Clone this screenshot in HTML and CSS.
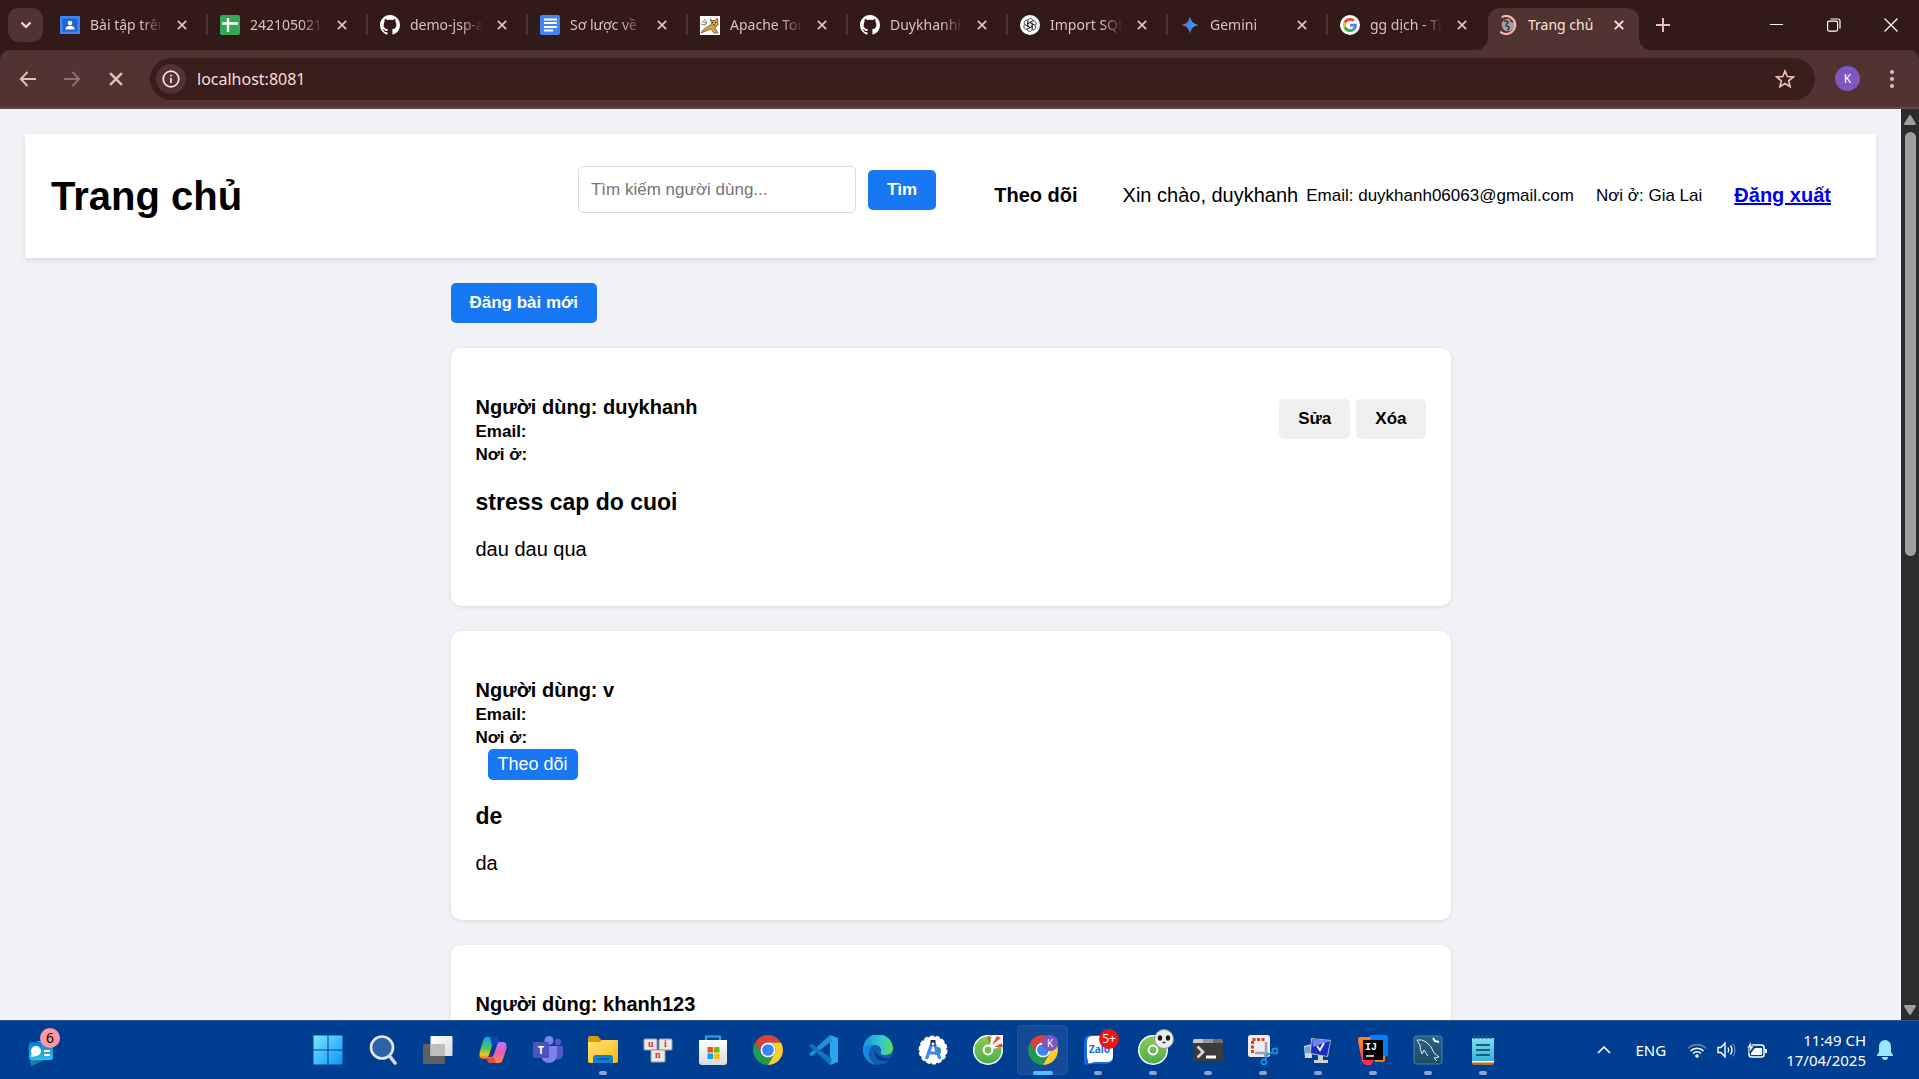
FILE: index.html
```html
<!DOCTYPE html>
<html lang="vi">
<head>
<meta charset="utf-8">
<meta name="viewport" content="width=device-width, initial-scale=1">
<title>Trang chủ</title>
<link rel="stylesheet" href="styles.css">
</head>
<body>
<svg class="defs" aria-hidden="true">
  <defs>
    <linearGradient id="g-gem" x1="0" x2="1"><stop offset="0" stop-color="#b06bb8"/><stop offset=".4" stop-color="#4a80dd"/><stop offset="1" stop-color="#2bb3f0"/></linearGradient>
    <linearGradient id="g-win" x1="0" y1="0" x2="1" y2="1"><stop offset="0" stop-color="#7be8ff"/><stop offset="1" stop-color="#0c93f5"/></linearGradient>
    <linearGradient id="g-view" x1="0" y1="0" x2="1" y2="1"><stop offset="0" stop-color="#fff"/><stop offset="1" stop-color="#dcdcdc"/></linearGradient>
    <linearGradient id="g-cop1" x1="0" y1="0" x2="0" y2="1"><stop offset="0" stop-color="#12a5f4"/><stop offset=".5" stop-color="#4fc35a"/><stop offset=".8" stop-color="#f2c51e"/><stop offset="1" stop-color="#ef5a2c"/></linearGradient>
    <linearGradient id="g-cop2" x1="0" y1="0" x2="0" y2="1"><stop offset="0" stop-color="#b47bf2"/><stop offset=".5" stop-color="#ea5cae"/><stop offset="1" stop-color="#fa8a45"/></linearGradient>
    <linearGradient id="g-folder" x1="0" y1="0" x2="1" y2="1"><stop offset="0" stop-color="#ffe27a"/><stop offset="1" stop-color="#fdb913"/></linearGradient>
    <linearGradient id="g-store" x1="0" y1="0" x2="0" y2="1"><stop offset="0" stop-color="#fff"/><stop offset="1" stop-color="#d6dbe2"/></linearGradient>
    <linearGradient id="g-edge" x1="0" y1="0" x2="1" y2="0"><stop offset="0" stop-color="#1f8fdf"/><stop offset=".55" stop-color="#2fc4d6"/><stop offset="1" stop-color="#5fdc5a"/></linearGradient>
    <linearGradient id="g-coc" x1="0" y1="0" x2="0" y2="1"><stop offset="0" stop-color="#8ecb4c"/><stop offset="1" stop-color="#4caf50"/></linearGradient>
    <linearGradient id="g-sql" x1="0" y1="0" x2="0" y2="1"><stop offset="0" stop-color="#2a6285"/><stop offset="1" stop-color="#1d4b68"/></linearGradient>
    <linearGradient id="g-note" x1="0" y1="0" x2="0" y2="1"><stop offset="0" stop-color="#7fe0f2"/><stop offset="1" stop-color="#35b0d2"/></linearGradient>
    <linearGradient id="g-ij" x1="0" y1="0" x2="0" y2="1"><stop offset="0" stop-color="#ff8a1e"/><stop offset="1" stop-color="#fb2c6a"/></linearGradient>
    <linearGradient id="g-wid" x1="0" y1="0" x2="0" y2="1"><stop offset="0" stop-color="#0a78d8"/><stop offset="1" stop-color="#2cc4e4"/></linearGradient>
  </defs>
  <symbol id="i-close" viewBox="0 0 10 10"><path d="M.8.8l8.4 8.4M9.2.8L.8 9.2" fill="none" stroke="currentColor" stroke-width="1.8"/></symbol>
  <symbol id="i-github" viewBox="0 0 16 16"><path fill="#fff" d="M8 0C3.58 0 0 3.58 0 8c0 3.54 2.29 6.53 5.47 7.59.4.07.55-.17.55-.38 0-.19-.01-.82-.01-1.49-2.01.37-2.53-.49-2.69-.94-.09-.23-.48-.94-.82-1.13-.28-.15-.68-.52-.01-.53.63-.01 1.08.58 1.23.82.72 1.21 1.87.87 2.33.66.07-.52.28-.87.51-1.07-1.78-.2-3.64-.89-3.64-3.95 0-.87.31-1.59.82-2.15-.08-.2-.36-1.02.08-2.12 0 0 .67-.21 2.2.82.64-.18 1.32-.27 2-.27s1.36.09 2 .27c1.53-1.04 2.2-.82 2.2-.82.44 1.1.16 1.92.08 2.12.51.56.82 1.27.82 2.15 0 3.07-1.87 3.75-3.65 3.95.29.25.54.73.54 1.48 0 1.07-.01 1.93-.01 2.2 0 .21.15.46.55.38A8.01 8.01 0 0 0 16 8c0-4.42-3.58-8-8-8Z"/></symbol>
  <symbol id="i-chrome" viewBox="2 2 44 44">
    <path fill="#dc4335" d="M4.95 13A22 22 0 0 1 43.05 13H24A11 11 0 0 0 14.47 29.5Z"/>
    <path fill="#1f9a50" d="M4.95 13L14.47 29.5A11 11 0 0 0 33.53 29.5L24 46A22 22 0 0 1 4.95 13Z"/>
    <path fill="#fccc30" d="M24 46L33.53 29.5A11 11 0 0 0 24 13H43.05A22 22 0 0 1 24 46Z"/>
    <circle cx="24" cy="24" r="11" fill="#fff"/><circle cx="24" cy="24" r="8.6" fill="#3f83f0"/>
  </symbol>
  <symbol id="i-coccoc" viewBox="0 0 30 30">
    <circle cx="15" cy="15" r="15" fill="#fff"/><circle cx="15" cy="15" r="13.6" fill="url(#g-coc)"/>
    <circle cx="15" cy="15" r="4.4" fill="none" stroke="#fff" stroke-width="2"/>
  </symbol>
</svg>

<header class="tabstrip">
  <button class="tab-search" aria-label="Tìm kiếm thẻ"><svg width="12" height="8" viewBox="0 0 12 8"><path d="M1.5 1.5L6 6l4.5-4.500" fill="none" stroke="currentColor" stroke-width="2.2"/></svg></button>
  <nav class="tabs">
    <div class="tab">
      <svg class="favicon" viewBox="0 0 20 20"><rect y="1" width="20" height="18" rx="1" fill="#4285f4"/><rect x="2.500" y="3.500" width="15" height="13" fill="#1a66d2"/><circle cx="10" cy="8" r="2.300" fill="#fff"/><path d="M5.500 14.500c0-3 2-3.700 4.500-3.700s4.500.7 4.500 3.700z" fill="#fff"/></svg>
      <span class="tab-title">Bài tập trên lớp</span><button class="tab-close" aria-label="Đóng"><svg width="10" height="10"><use href="#i-close"/></svg></button>
    </div>
    <div class="tab">
      <svg class="favicon" viewBox="0 0 20 20"><rect width="20" height="20" rx="2" fill="#34a853"/><path d="M8 3v14M2 8.500h16" stroke="#fff" stroke-width="2.400"/></svg>
      <span class="tab-title">242105021101</span><button class="tab-close" aria-label="Đóng"><svg width="10" height="10"><use href="#i-close"/></svg></button>
    </div>
    <div class="tab">
      <svg class="favicon"><use href="#i-github"/></svg>
      <span class="tab-title">demo-jsp-app</span><button class="tab-close" aria-label="Đóng"><svg width="10" height="10"><use href="#i-close"/></svg></button>
    </div>
    <div class="tab">
      <svg class="favicon" viewBox="0 0 20 20"><rect width="20" height="20" rx="2" fill="#4285f4"/><path d="M4 4.500h13M4 8h13M4 12h13M4 15.500h9" stroke="#fff" stroke-width="1.900"/></svg>
      <span class="tab-title">Sơ lược về JSP</span><button class="tab-close" aria-label="Đóng"><svg width="10" height="10"><use href="#i-close"/></svg></button>
    </div>
    <div class="tab">
      <svg class="favicon" viewBox="0 0 20 20"><rect y="1" width="20" height="19" fill="#fdfcf8"/><path d="M10 4l2 1.500h3L17.500 3l.5 7-3 3 3 5h-4l-3-4-5 2-5 2 2-3 4-3 5-3z" fill="#d9a33c" stroke="#5a4632" stroke-width=".7"/><path d="M2 6l5 3M1 9l5 1M4 4l3 4" stroke="#555" stroke-width=".8"/><path d="M12 7l1 1m3-1l-1 1m-2 2h2" stroke="#222"/></svg>
      <span class="tab-title">Apache Tomcat</span><button class="tab-close" aria-label="Đóng"><svg width="10" height="10"><use href="#i-close"/></svg></button>
    </div>
    <div class="tab">
      <svg class="favicon"><use href="#i-github"/></svg>
      <span class="tab-title">Duykhanhh06</span><button class="tab-close" aria-label="Đóng"><svg width="10" height="10"><use href="#i-close"/></svg></button>
    </div>
    <div class="tab">
      <svg class="favicon" viewBox="0 0 20 20"><circle cx="10" cy="10" r="10" fill="#fff"/><g fill="none" stroke="#222" stroke-width=".8"><path id="petal" d="M7.800 11.300V6.200c0-3.600 5.200-3.300 5.300-.2M7.800 8.700l4.400-2.500"/><use href="#petal" transform="rotate(60 10 10)"/><use href="#petal" transform="rotate(120 10 10)"/><use href="#petal" transform="rotate(180 10 10)"/><use href="#petal" transform="rotate(240 10 10)"/><use href="#petal" transform="rotate(300 10 10)"/></g></svg>
      <span class="tab-title">Import SQL file</span><button class="tab-close" aria-label="Đóng"><svg width="10" height="10"><use href="#i-close"/></svg></button>
    </div>
    <div class="tab">
      <svg class="favicon" viewBox="0 0 20 20"><path d="M10 1c1 5.500 3.500 8 8.500 9-5 1-7.500 3.500-8.500 9-1-5.500-3.500-8-8.500-9 5-1 7.500-3.500 8.500-9z" fill="url(#g-gem)"/></svg>
      <span class="tab-title">Gemini</span><button class="tab-close" aria-label="Đóng"><svg width="10" height="10"><use href="#i-close"/></svg></button>
    </div>
    <div class="tab tab-last">
      <svg class="favicon" viewBox="-10 -10 68 68"><circle cx="24" cy="24" r="34" fill="#fff"/><path fill="#EA4335" d="M24 9.500c3.540 0 6.710 1.220 9.210 3.600l6.850-6.850C35.900 2.380 30.470 0 24 0 14.620 0 6.510 5.380 2.560 13.220l7.980 6.190C12.430 13.720 17.740 9.500 24 9.500z"/><path fill="#4285F4" d="M46.980 24.550c0-1.570-.15-3.090-.38-4.550H24v9.020h12.940c-.58 2.960-2.260 5.480-4.780 7.180l7.730 6c4.510-4.180 7.090-10.360 7.090-17.650z"/><path fill="#FBBC05" d="M10.530 28.590c-.48-1.450-.76-2.990-.76-4.590s.27-3.140.76-4.590l-7.980-6.190C.92 16.460 0 20.120 0 24c0 3.880.92 7.540 2.560 10.780l7.970-6.190z"/><path fill="#34A853" d="M24 48c6.480 0 11.930-2.130 15.890-5.810l-7.730-6c-2.150 1.450-4.920 2.300-8.160 2.300-6.260 0-11.570-4.220-13.470-9.910l-7.980 6.190C6.510 42.620 14.620 48 24 48z"/></svg>
      <span class="tab-title">gg dịch - Tìm</span><button class="tab-close" aria-label="Đóng"><svg width="10" height="10"><use href="#i-close"/></svg></button>
    </div>
    <div class="tab tab-active">
      <svg class="favicon" viewBox="0 0 20 20"><circle cx="8" cy="10" r="6.300" fill="#9aa0a6"/><path d="M4 6.500c2-1 4-.5 4 1S5.500 9 6 10.500s3 0 3 2-1.500 2-1 3M10 5l3 2" fill="none" stroke="#513331" stroke-width="1.600"/><path d="M2.500 1.800A9 9 0 1 1 .8 17.200" fill="none" stroke="#ffb3a9" stroke-width="2.200" stroke-linecap="round"/></svg>
      <span class="tab-title">Trang chủ</span><button class="tab-close" aria-label="Đóng"><svg width="10" height="10"><use href="#i-close"/></svg></button>
    </div>
    <button class="tab-new" aria-label="Thẻ mới"><svg width="14" height="14" viewBox="0 0 14 14"><path d="M7 0v14M0 7h14" stroke="currentColor" stroke-width="2"/></svg></button>
  </nav>
  <div class="window-controls">
    <button aria-label="Thu nhỏ"><svg width="14" height="14" viewBox="0 0 14 14"><path d="M0 6.500h13" stroke="#fff"/></svg></button>
    <button aria-label="Khôi phục"><svg width="14" height="14" viewBox="0 0 14 14"><rect x=".6" y="3.100" width="10" height="10" rx="1.500" fill="none" stroke="#fff" stroke-width="1.200"/><path d="M3.500 1h7.500a2 2 0 0 1 2 2v7.500" fill="none" stroke="#fff" stroke-width="1.200"/></svg></button>
    <button aria-label="Đóng cửa sổ"><svg width="14" height="14" viewBox="0 0 14 14"><path d="M.5.5l13 13M13.500.5l-13 13" stroke="#fff" stroke-width="1.200"/></svg></button>
  </div>
</header>

<div class="toolbar">
  <button class="tool" aria-label="Quay lại"><svg width="18" height="16" viewBox="0 0 18 16"><path d="M17 8H2M8.500 1L1.800 8l6.700 7" fill="none" stroke="currentColor" stroke-width="1.900"/></svg></button>
  <button class="tool tool-dim" aria-label="Tiến"><svg width="18" height="16" viewBox="0 0 18 16"><path d="M1 8h15M9.500 1l6.700 7-6.700 7" fill="none" stroke="currentColor" stroke-width="1.900"/></svg></button>
  <button class="tool" aria-label="Dừng"><svg width="14" height="14"><use href="#i-close"/></svg></button>
  <div class="omnibox">
    <button class="site-info" aria-label="Thông tin trang"><svg width="18" height="18" viewBox="0 0 18 18"><circle cx="9" cy="9" r="7.800" fill="none" stroke="currentColor" stroke-width="1.700"/><path d="M9 8v5M9 4.800v1.700" stroke="currentColor" stroke-width="1.700"/></svg></button>
    <input class="address" type="text" aria-label="Địa chỉ" value="localhost:8081">
    <button class="tool" aria-label="Đánh dấu"><svg width="20" height="20" viewBox="0 0 20 20"><path d="M10 2l2.300 5.500 6 .5-4.600 3.900 1.400 5.800-5.100-3.100-5.100 3.100 1.400-5.800L1.700 8l6-.5z" fill="none" stroke="currentColor" stroke-width="1.700"/></svg></button>
  </div>
  <button class="profile" aria-label="Hồ sơ">K</button>
  <button class="tool" aria-label="Menu"><svg width="4" height="18" viewBox="0 0 4 18"><g fill="currentColor"><circle cx="2" cy="2" r="2"/><circle cx="2" cy="9" r="2"/><circle cx="2" cy="16" r="2"/></g></svg></button>
</div>

<div class="viewport">
  <main class="page">
    <header class="site-header">
      <h1>Trang chủ</h1>
      <form class="search">
        <input type="text" placeholder="Tìm kiếm người dùng..." aria-label="Tìm kiếm người dùng">
        <button class="btn btn-primary" type="button">Tìm</button>
      </form>
      <strong class="follow-link">Theo dõi</strong>
      <div class="user">
        <span>Xin chào, duykhanh</span>
        <span class="small">Email: duykhanh06063@gmail.com</span>
        <span class="small place">Nơi ở: Gia Lai</span>
        <a href="#">Đăng xuất</a>
      </div>
    </header>

    <section class="feed">
      <button class="btn btn-primary">Đăng bài mới</button>

      <article class="post">
        <div class="post-head">
          <div class="author">
            <h4>Người dùng: duykhanh</h4>
            <div class="meta">Email:</div>
            <div class="meta">Nơi ở:</div>
          </div>
          <div class="actions">
            <button class="btn">Sửa</button>
            <button class="btn">Xóa</button>
          </div>
        </div>
        <h3>stress cap do cuoi</h3>
        <p>dau dau qua</p>
      </article>

      <article class="post">
        <div class="post-head">
          <div class="author">
            <h4>Người dùng: v</h4>
            <div class="meta">Email:</div>
            <div class="meta">Nơi ở:</div>
            <button class="btn-follow">Theo dõi</button>
          </div>
        </div>
        <h3>de</h3>
        <p>da</p>
      </article>

      <article class="post">
        <div class="post-head">
          <div class="author">
            <h4>Người dùng: khanh123</h4>
            <div class="meta">Email:</div>
            <div class="meta">Nơi ở:</div>
          </div>
        </div>
      </article>
    </section>
  </main>
  <div class="scrollbar" aria-hidden="true">
    <svg width="12" height="10" viewBox="0 0 12 10"><path d="M6 1l5 8H1z" fill="#9f9f9f" stroke="#9f9f9f" stroke-width="2" stroke-linejoin="round"/></svg>
    <div class="track"><div class="thumb"></div></div>
    <svg width="12" height="10" viewBox="0 0 12 10"><path d="M6 9l5-8H1z" fill="#9f9f9f" stroke="#9f9f9f" stroke-width="2" stroke-linejoin="round"/></svg>
  </div>
</div>

<footer class="taskbar">
  <div class="widgets">
    <button class="widget-btn" aria-label="Tiện ích">
      <svg width="28" height="34" viewBox="0 0 28 34"><path d="M1 13l3 20 18-8z" fill="#1184b8"/><path d="M10 8h8v6h-8z" fill="#3fae6a"/><rect x="2" y="9" width="24" height="18" rx="3" fill="url(#g-wid)"/><circle cx="9" cy="18" r="5" fill="#fff"/><path d="M4 24l1-5 5 4z" fill="#fff"/><path d="M17 18h6M17 22h6" stroke="#fff" stroke-width="2"/></svg>
      <span class="badge badge-pink">6</span>
    </button>
  </div>
  <div class="apps">
    <button class="app" aria-label="Bắt đầu"><svg viewBox="0 0 30 30"><path d="M.5.500h14v14H.5zM15.500.500h14v14h-14zM.5 15.500h14v14H.5zM15.500 15.500h14v14h-14z" fill="url(#g-win)"/></svg></button>
    <button class="app" aria-label="Tìm kiếm"><svg viewBox="0 0 30 30"><circle cx="14" cy="12.500" r="11" fill="#2c63a8" stroke="#e6e6e8" stroke-width="2.600"/><path d="M21.500 21l5.500 7" stroke="#d9d9dc" stroke-width="3.600" stroke-linecap="round"/></svg></button>
    <button class="app" aria-label="Chế độ xem tác vụ"><svg viewBox="0 0 30 30"><rect y="9" width="22" height="20" rx="1" fill="#5f5f5f"/><rect x="7.500" y="1" width="22" height="20" rx="1" fill="url(#g-view)"/><path d="M7.500 9H22v12H7.500z" fill="#bdbdbd"/></svg></button>
    <button class="app" aria-label="Copilot"><svg viewBox="0 0 30 30"><path d="M9 2h8c3 0 3 3 4 6h-3c-3 0-4 2-5 6l-2 6c-1 3-2 4-4 4H5c-4 0-4-4-3-8L5 6c1-3 2-4 4-4z" fill="url(#g-cop1)"/><path d="M12 2h6c2 0 3 3 4 6h-4c-3 0-3 1-4 3z" fill="#173fc4"/><path d="M21 28h-8c-3 0-3-3-4-6h3c3 0 4-2 5-6l2-6c1-3 2-3 4-3h2c4 0 4 4 3 8l-3 9c-1 3-2 4-4 4z" fill="url(#g-cop2)"/><path d="M18 28h-5c-3 0-4-3-5-5h3c2 0 3-1 4-2z" fill="#ee4c36"/></svg></button>
    <button class="app" aria-label="Teams"><svg viewBox="0 0 30 30"><circle cx="16" cy="5.500" r="4.500" fill="#7b83eb"/><circle cx="25" cy="7" r="3.200" fill="#5059c9"/><path d="M21 11h9v8a5 5 0 0 1-7 5z" fill="#5059c9"/><path d="M8 11h16v9a8 8 0 0 1-16 0z" fill="#7b83eb"/><rect x="0" y="7" width="16" height="16" rx="1.500" fill="#4b53bc"/><text x="8" y="19" text-anchor="middle" class="glyph-t">T</text></svg></button>
    <button class="app running" aria-label="Tệp"><svg viewBox="0 0 30 30"><path d="M0 3q0-2 2-2h8l3 4h15v8H0z" fill="#dc9a00"/><path d="M0 7h12l2-2h16v21q0 2-2 2H2q-2 0-2-2z" fill="url(#g-folder)"/><path d="M5 28v-5q0-3 3-3h14q3 0 3 3v5z" fill="#0f7fd4"/><path d="M9 24h12" stroke="#07529a" stroke-width="1.500"/></svg></button>
    <button class="app" aria-label="UniKey"><svg viewBox="0 0 30 30"><g fill="#e9e9e9" stroke="#9d9d9d"><rect x="1" y="4" width="13" height="11" rx="1"/><rect x="16" y="4" width="13" height="11" rx="1"/><rect x="8" y="15" width="14" height="12" rx="1"/></g><g class="glyph-uin"><text x="5" y="12">u</text><text x="21" y="12">i</text><text x="12" y="23">n</text></g></svg></button>
    <button class="app" aria-label="Store"><svg viewBox="0 0 30 30"><path d="M8 6V1.500h14V6" fill="none" stroke="#27a8ea" stroke-width="2.200"/><path d="M1 5h28v22q0 3-3 3H4q-3 0-3-3z" fill="url(#g-store)"/><path d="M9.500 12H15v5.500H9.500z" fill="#f25022"/><path d="M16 12h5.500v5.500H16z" fill="#7fba00"/><path d="M9.500 18.500H15V24H9.500z" fill="#00a4ef"/><path d="M16 18.500h5.500V24H16z" fill="#ffb900"/></svg></button>
    <button class="app" aria-label="Chrome"><svg><use href="#i-chrome"/></svg></button>
    <button class="app" aria-label="VS Code"><svg viewBox="0 0 30 30"><path d="M22 0l8 3v24l-8 3z" fill="#2ba4ee"/><path d="M22 0L1 19l2.500 2.500L24 6z" fill="#1f8fd8"/><path d="M22 30L1 11l2.500-2.500L24 24z" fill="#0f75bc"/></svg></button>
    <button class="app" aria-label="Edge"><svg viewBox="0 0 30 30"><circle cx="15" cy="15" r="15" fill="#0f5fae"/><path d="M0 15A15 15 0 0 1 30 13c0 5-4 7-8 7-3 0-5-1-4-3 1-4-2-7-6-7C7 10 2 12 0 15z" fill="url(#g-edge)"/><path d="M0 15c1-3 6-6 11-5-4 2-6 6-5 11s4 8 8 9A15 15 0 0 1 0 15z" fill="#1b86dc"/><path d="M12 15c-2 6 3 12 12 11l4-3q-4 1-8-1c-4-1-7-3-8-7z" fill="#003e92"/></svg></button>
    <button class="app" aria-label="Android Studio"><svg viewBox="0 0 30 30"><circle cx="15" cy="15" r="13.500" fill="#fff" stroke="#fff" stroke-width="2" stroke-dasharray="4 2"/><path d="M17 12h3q3 0 3 4t-3 4h-3z" fill="#25a45a"/><path d="M14 8L8.500 24M16 8l6 16M9 18h12" fill="none" stroke="#4285f4" stroke-width="3.200"/><path d="M12.500 5h5v6h-5z" fill="#223548"/><circle cx="15" cy="9" r="1.500" fill="#fff"/></svg></button>
    <button class="app" aria-label="Cốc Cốc"><svg viewBox="0 0 30 30"><use href="#i-coccoc"/><path d="M17 10L19 0h11v10l-9 4z" fill="#fff"/><path d="M17 9l-3-7 3-1zM19 10l5-9 4 2zM21 12l8-4v4z" fill="#ee4b3c"/></svg></button>
    <button class="app app-active" aria-label="Chrome đang mở"><svg><use href="#i-chrome"/></svg><span class="badge badge-purple">K</span></button>
    <button class="app running" aria-label="Zalo"><svg viewBox="0 0 30 30"><path d="M7 0h16q7 0 7 7v15q0 7-7 7H9L1 30V7q0-7 6-7z" fill="#1a66ea"/><path d="M9 1h16q5 0 5 6v15q0 5-7 5H11q-4 2-6 1 1-2-1-5V7q0-6 5-6z" fill="#fff"/><text x="16.500" y="18" text-anchor="middle" class="glyph-zalo">Zalo</text></svg><span class="badge badge-red">5+</span></button>
    <button class="app running" aria-label="Cốc Cốc gấu trúc"><svg viewBox="0 0 30 30"><use href="#i-coccoc"/></svg><span class="badge badge-panda"><svg viewBox="0 0 20 20"><circle cx="10" cy="10" r="9.500" fill="#ececec" stroke="#8f8f8f"/><ellipse cx="6" cy="9" rx="2.200" ry="2.800" fill="#1c1c1c"/><ellipse cx="14" cy="9" rx="2.200" ry="2.800" fill="#1c1c1c"/><path d="M8.500 13.500h3" stroke="#333" stroke-width="1.500"/></svg></span></button>
    <button class="app running" aria-label="Terminal"><svg viewBox="0 0 30 30"><rect y="4" width="30" height="22" rx="1.500" fill="#3b3b3b"/><path d="M0 8V5.500Q0 4 1.500 4H10v4z" fill="#c9c9c9"/><path d="M10 4h10v4H10z" fill="#999"/><path d="M20 4h8.500Q30 4 30 5.500V8H20z" fill="#6f6f6f"/><path d="M4.500 11.500l5.500 5.500-5.500 5.500" fill="none" stroke="#d6d6d6" stroke-width="2.800"/><path d="M13 22h10" stroke="#fff" stroke-width="3"/></svg></button>
    <button class="app running" aria-label="Công cụ cắt"><svg viewBox="0 0 30 30"><rect width="22" height="22" rx="2.500" fill="#eeeef2"/><path d="M4.500 18V4.500H17" fill="none" stroke="#d8401e" stroke-width="3" stroke-dasharray="3 1.500"/><path d="M18 7v11q0 2-2 3M7 18h13" fill="none" stroke="#9ba1a8" stroke-width="2.500"/><circle cx="27" cy="16" r="2.600" fill="none" stroke="#1597e5" stroke-width="1.600"/><circle cx="16" cy="27" r="2.600" fill="none" stroke="#1597e5" stroke-width="1.600"/><path d="M25 17l-6 3-2 5" fill="none" stroke="#1597e5" stroke-width="1.800"/></svg></button>
    <button class="app running" aria-label="Máy tính"><svg viewBox="0 0 30 30"><path d="M1 11l8-2v14l-7 0z" fill="#d4d7d6"/><path d="M2 12l5-1v7H2z" fill="#6ba4d8"/><path d="M8 3l20 2-3 17-18-3z" fill="#aeb6c6"/><path d="M9 4l18 2-3 15L8 18z" fill="#1c2bc0"/><path d="M9 4l18 2L10 12z" fill="#6c86e8"/><path d="M14 11l3 4 4-7" fill="none" stroke="#fff" stroke-width="1.800"/><path d="M15 20l5 1v4h5v3H11v-3h4z" fill="#cfd2d3"/></svg></button>
    <button class="app running" aria-label="IntelliJ"><svg viewBox="0 0 30 30"><path d="M11 2l2-2h15q2 0 2 2v19l-5 1z" fill="#087cfa"/><path d="M0 4q0-2 2-2h11L8 27l-3-2z" fill="#fc801d"/><path d="M0 6l9-2v26q-3-1-5-3z" fill="url(#g-ij)"/><path d="M4 21h14l-5 9H7z" fill="#fe2857"/><path d="M16 21h11v4q0 2-2 2h-8z" fill="#f57c00"/><rect x="5" y="5" width="20" height="20" fill="#000"/><text x="7" y="15" class="glyph-ij">IJ</text><path d="M8 21h8" stroke="#fff" stroke-width="1.500"/></svg></button>
    <button class="app running" aria-label="MySQL"><svg viewBox="0 0 30 30"><rect x="1" y="1" width="28" height="28" rx="2" fill="url(#g-sql)" stroke="#47809e"/><path d="M4 5q5-1 9 2 6 4 8 11l5 4-5 1 3 3M4 5l3 5q0 5 2 9l2-4 4 6" fill="none" stroke="#dfe9ee" stroke-width="1"/><path d="M20 3l2 3 4 1" fill="none" stroke="#fff" stroke-width="2"/></svg></button>
    <button class="app running" aria-label="Notepad"><svg viewBox="0 0 30 30"><path d="M4 3h22v24H4z" fill="url(#g-note)"/><path d="M4 26h22v2q0 2-2 2H6q-2 0-2-2z" fill="#b86a2b"/><path d="M4 26h22v1.500H4z" fill="#fff"/><path d="M6.500 0v4M10.500 0v4M14.500 0v4M18.500 0v4M22.500 0v4" stroke="#14607e" stroke-width="1.800"/><path d="M8 10h14M8 15h14M8 20h14" stroke="#14607e" stroke-width="1.800"/></svg></button>
  </div>
  <div class="tray">
    <svg width="14" height="8" viewBox="0 0 14 8"><path d="M1 7l6-6 6 6" fill="none" stroke="#fff" stroke-width="1.600"/></svg>
    <span class="lang">ENG</span>
    <div class="tray-icons">
      <svg width="20" height="16" viewBox="0 0 20 16"><g fill="none" stroke="#fff" stroke-width="1.600"><path d="M1 6.500a12.500 12.500 0 0 1 18 0" stroke-opacity=".35"/><path d="M3.500 9a9 9 0 0 1 13 0M6 11.500a5.500 5.500 0 0 1 8 0"/></g><circle cx="10" cy="14" r="1.800" fill="#fff"/></svg>
      <svg width="20" height="18" viewBox="0 0 20 18"><g fill="none" stroke="#fff" stroke-width="1.400"><path d="M1 6.500h3l4-4.500v14l-4-4.500H1z"/><path d="M11 6.500q1.500 2.500 0 5M13.500 4.500q3 4.500 0 9"/><path d="M16 2.500q4 6.500 0 13" stroke-opacity=".35"/></g></svg>
      <svg width="20" height="18" viewBox="0 0 20 18"><rect x="2" y="4" width="15" height="12" rx="2.500" fill="none" stroke="#fff" stroke-width="1.500"/><path d="M4 12l4-5h7v7H4z" fill="#fff"/><path d="M18 8h2v4h-2z" fill="#fff"/><path d="M4 0L0 7h3l-1 5 5-7H4z" fill="#fff" stroke="#003e92" stroke-width=".6"/></svg>
    </div>
    <div class="clock"><span>11:49 CH</span><span>17/04/2025</span></div>
    <svg width="16" height="20" viewBox="0 0 16 20"><path d="M8 0a6 6 0 0 0-6 6v6l-2 3v1h16v-1l-2-3V6a6 6 0 0 0-6-6zM5 17h6a3 3 0 0 1-6 0z" fill="#9be6fb"/></svg>
  </div>
</footer>
</body>
</html>
```
FILE: styles.css
```css
* { box-sizing: border-box; }

body {
  margin: 0;
  height: 100vh;
  display: flex;
  flex-direction: column;
  overflow: hidden;
  background: #311a17;
  font-family: "Liberation Sans", Arial, sans-serif;
  font-size: 20px;
  color: #000;
}

button { font-family: inherit; border: 0; padding: 0; background: none; color: inherit; cursor: pointer; }
svg { display: block; flex: none; }
.defs { position: absolute; width: 0; height: 0; }

/* Tab strip */
.tabstrip {
  display: flex;
  height: 50px;
  padding-left: 8px;
  color: #e7bdb6;
  font-family: "Noto Sans", "Open Sans", sans-serif;
  font-size: 14px;
}
.tab-search {
  width: 35px;
  height: 34px;
  margin: 8px 3px 0 0;
  display: grid;
  place-items: center;
  border-radius: 11px;
  background: #513331;
  color: #fbe3df;
}
.tabs { flex: 1; min-width: 0; display: flex; align-items: flex-end; }
.tab {
  position: relative;
  width: 160px;
  height: 42px;
  padding: 0 15px 8px 14px;
  display: flex;
  align-items: center;
  gap: 10px;
}
.tab::after {
  content: "";
  position: absolute;
  right: -2px;
  top: 6px;
  width: 2px;
  height: 21px;
  background: #513331;
}
.tab-last::after { display: none; }
.favicon { width: 20px; height: 20px; }
.tab-title {
  flex: 1;
  min-width: 0;
  overflow: hidden;
  white-space: nowrap;
  line-height: 20px;
  -webkit-mask-image: linear-gradient(90deg, #000 70%, transparent);
  mask-image: linear-gradient(90deg, #000 70%, transparent);
}
.tab-close { padding: 4px; }
.tab-active {
  width: 151px;
  margin: 0 7px 0 2px;
  padding: 0 11px 8px 12px;
  gap: 8px;
  border-radius: 12px 12px 0 0;
  background: #513331;
  color: #fbe3df;
}
.tab-active .tab-title { -webkit-mask-image: none; mask-image: none; }
.tab-active::before, .tab-active::after {
  content: "";
  position: absolute;
  top: auto;
  bottom: 0;
  width: 12px;
  height: 12px;
}
.tab-active::before { left: -12px; background: radial-gradient(circle at 0 0, #311a17 12px, #513331 12px); }
.tab-active::after { right: -12px; background: radial-gradient(circle at 100% 0, #311a17 12px, #513331 12px); }
.tab-new { padding: 10px; margin-bottom: 8px; }
.window-controls { display: flex; align-items: flex-start; }
.window-controls button { width: 57px; height: 50px; display: grid; place-items: center; }

/* Toolbar */
.toolbar {
  display: flex;
  align-items: center;
  height: 59px;
  padding: 0 5px 0 6px;
  border-bottom: 2px solid #60474a;
  border-radius: 10px 10px 0 0;
  background: #513331;
  color: #e7bdb6;
}
.tool { width: 44px; height: 40px; display: grid; place-items: center; }
.tool-dim { color: #90706d; }
.omnibox {
  flex: 1;
  display: flex;
  align-items: center;
  height: 42px;
  margin-left: 12px;
  padding: 0 8px 0 6px;
  border-radius: 21px;
  background: #3a1e1b;
}
.site-info { width: 30px; height: 30px; display: grid; place-items: center; border-radius: 50%; background: #513331; color: #fbe3df; }
.address {
  flex: 1;
  padding: 0 11px;
  border: 0;
  outline: 0;
  background: none;
  color: #f5dedb;
  font-family: "Noto Sans", "Open Sans", sans-serif;
  font-size: 16px;
}
.profile {
  width: 25px;
  height: 25px;
  margin: 0 10px 0 20px;
  border-radius: 50%;
  background: #7e57c2;
  color: #fff;
  font-family: "Noto Sans", sans-serif;
  font-size: 12px;
}

/* Page */
.viewport { flex: 1; min-height: 0; display: flex; background: #f0f2f5; }
.page { flex: 1; min-width: 0; overflow: hidden; padding: 25px; }
.site-header {
  display: flex;
  align-items: center;
  padding: 38px 45px 39px 26px;
  background: #fff;
  box-shadow: 0 2px 5px rgba(0, 0, 0, .1);
  line-height: 23px;
  white-space: nowrap;
}
.site-header h1 { margin: 0 auto 0 0; font-size: 40px; line-height: 46px; }
.search { display: flex; align-items: center; gap: 12px; margin: -6px 0 6px; }
.search input {
  width: 278px;
  height: 47px;
  padding: 0 12px;
  border: 1px solid #ddd;
  border-radius: 5px;
  font-family: inherit;
  font-size: 17px;
}
.search input::placeholder { color: #757575; }
.follow-link { margin-left: 58px; }
.user { display: flex; align-items: center; margin-left: 45px; }
.user .small { margin-left: 8px; font-size: 17px; }
.user .place { margin-left: 22px; }
.user a { margin-left: 32px; font-weight: bold; color: #00e; }

.btn {
  height: 40px;
  padding: 0 19px;
  border-radius: 5px;
  background: #efefef;
  font-size: 17px;
  font-weight: bold;
}
.btn-primary { background: #1877f2; color: #fff; }

.feed { max-width: 1000px; margin: 25px auto 0; }
.post {
  margin-top: 25px;
  padding: 48px 25px 45px;
  border-radius: 10px;
  background: #fff;
  box-shadow: 0 1px 4px rgba(0, 0, 0, .1);
  line-height: 23px;
}
.post-head { display: flex; justify-content: space-between; align-items: flex-start; }
.post h4 { margin: 0 0 1px; font-size: 20px; }
.meta { font-size: 17px; font-weight: bold; }
.post h3 { margin: 23px 0 22px; font-size: 23px; line-height: 27px; }
.post p { margin: 0; }
.actions { display: flex; gap: 6px; padding-top: 3px; }
.btn-follow {
  display: block;
  height: 31px;
  margin-left: 12px;
  padding: 0 10px;
  border-radius: 5px;
  background: #1877f2;
  color: #fff;
  font-size: 18px;
}

.scrollbar {
  width: 18px;
  padding: 6px 0 5px;
  display: flex;
  flex-direction: column;
  align-items: center;
  gap: 7px;
  background: #2c2c2c;
}
.track { flex: 1; width: 11px; }
.thumb { height: 49%; border-radius: 6px; background: #9f9f9f; }

/* Taskbar */
.taskbar {
  display: flex;
  align-items: center;
  height: 59px;
  border-top: 1px solid #2a5a96;
  background: #003e92;
  color: #fff;
  font-family: "Noto Sans", "Open Sans", sans-serif;
}
.widgets { flex: 1; padding-left: 27px; }
.widget-btn { position: relative; display: block; }
.apps { display: flex; }
.app {
  position: relative;
  width: 51px;
  height: 50px;
  margin: 0 2px;
  display: grid;
  place-items: center;
  border-radius: 5px;
}
.app > svg { width: 30px; height: 30px; }
.running::after, .app-active::after {
  content: "";
  position: absolute;
  left: 50%;
  bottom: 0;
  width: 8px;
  height: 4px;
  margin-left: -4px;
  border-radius: 2px;
  background: #8ba5cf;
}
.app-active { background: #144b99; box-shadow: inset 0 0 0 1px #23559f; }
.app-active::after { width: 20px; margin-left: -10px; background: #4cc2ff; }
.badge {
  position: absolute;
  top: 4px;
  right: 4px;
  width: 20px;
  height: 20px;
  border-radius: 50%;
  font-size: 12px;
  line-height: 20px;
  text-align: center;
}
.badge-red { background: #f01414; }
.badge-pink { top: -5px; right: -5px; background: #ff99a0; color: #000; font-size: 14px; }
.badge-purple { top: 10px; right: 10px; width: 16px; height: 16px; background: #7e57c2; font-size: 10px; line-height: 16px; }
.glyph-t { font: bold 11px "Noto Sans", sans-serif; fill: #fff; }
.glyph-uin { font: bold 10px "Liberation Serif", serif; fill: #d33; }
.glyph-zalo { font: bold 10px "Noto Sans", sans-serif; fill: #1a66ea; }
.glyph-ij { font: bold 10px "Liberation Mono", monospace; fill: #fff; }

.tray { width: 409px; display: flex; align-items: center; justify-content: flex-end; padding-right: 26px; font-size: 15px; }
.lang { margin: 0 21px 0 25px; }
.tray-icons { display: flex; align-items: center; gap: 10px; margin-right: 19px; }
.clock { display: flex; flex-direction: column; align-items: flex-end; margin-right: 11px; line-height: 20px; }
```
